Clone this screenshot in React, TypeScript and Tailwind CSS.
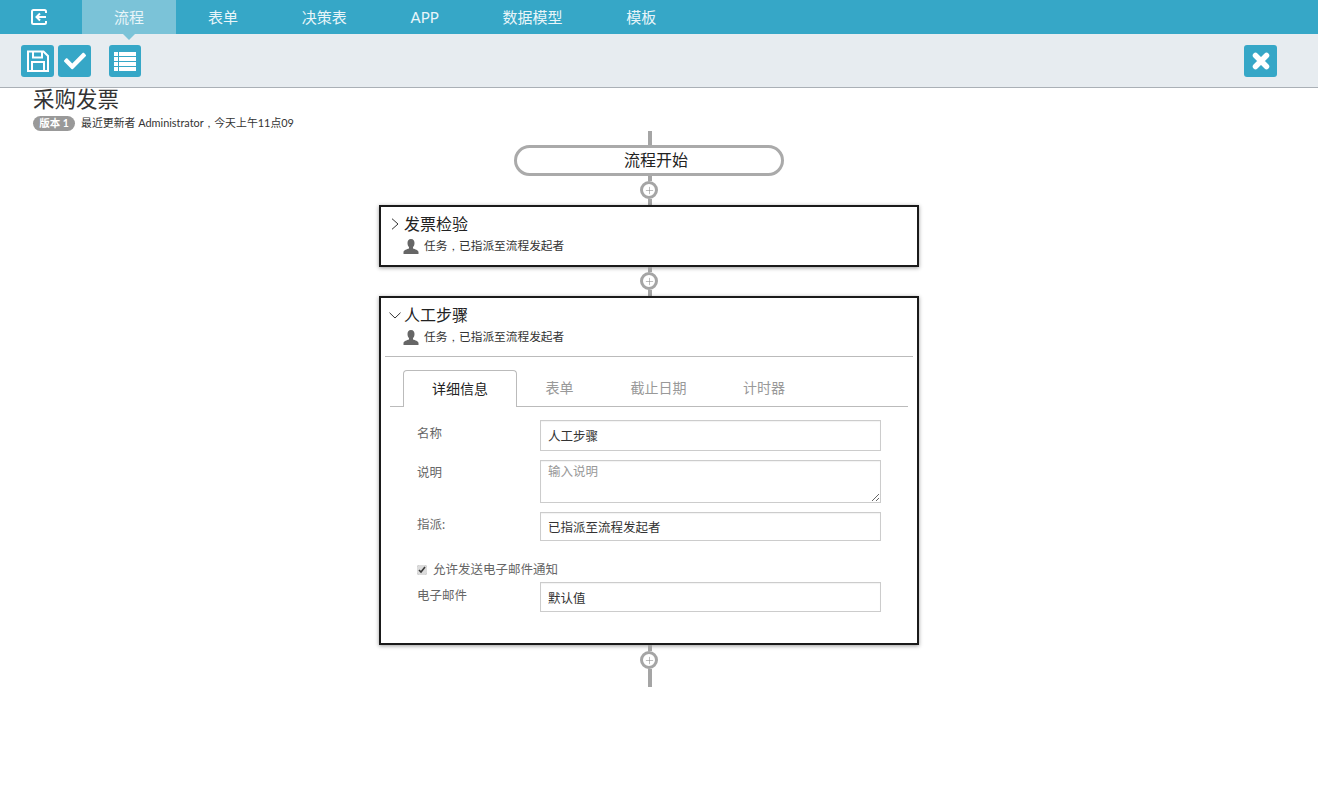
import { FaCheck } from "react-icons/fa";
import { Plus } from "lucide-react";

const font = "font-['Lato','Noto_Sans_CJK_SC',sans-serif]";

function NavItem({ label, active }: { label: string; active?: boolean }) {
    return (
        <div className={`relative flex h-full items-center text-[15px] text-[#e8f5f9] ${active ? "bg-[#7bc3d8] px-8" : "px-[31.9px]"}`}>
            {label}
            {active && (
                <div className="absolute left-1/2 top-full -ml-[6px] h-0 w-0 border-x-[6px] border-t-[6px] border-x-transparent border-t-[#7bc3d8]" />
            )}
        </div>
    );
}

function ToolButton({ children, className = "" }: { children: React.ReactNode; className?: string }) {
    return (
        <button className={`flex h-[32px] items-center justify-center rounded-[3px] bg-[#36a7c7] text-white ${className}`}>
            {children}
        </button>
    );
}

function Connector({ last }: { last?: boolean }) {
    return (
        <div className="flex flex-col items-center">
            <div className={`ml-[2px] w-[4px] bg-[#a5a5a5] ${last ? "h-[6px]" : "h-[5px]"}`} />
            <div className="flex h-[18px] w-[18px] items-center justify-center rounded-full border-[3px] border-[#a5a5a5] bg-white text-[#888]">
                <Plus size={11} strokeWidth={1.2} />
            </div>
            <div className={`ml-[2px] w-[4px] bg-[#a5a5a5] ${last ? "h-[18px]" : "h-[6px]"}`} />
        </div>
    );
}

function StepHead({ title, open }: { title: string; open?: boolean }) {
    return (
        <>
            <div className="flex h-[22px] items-center">
                <div className="flex w-[22px] justify-center pl-[3px] text-[#333]">
                    {open ? (
                        <svg width="12" height="7" viewBox="0 0 12 7" fill="none" stroke="currentColor" strokeWidth="1">
                            <path d="M.5.7 6 6 11.500.7" />
                        </svg>
                    ) : (
                        <svg width="8" height="12" viewBox="0 0 8 12" fill="none" stroke="currentColor" strokeWidth="1">
                            <path d="M1 .7 7 6l-6 5.300" />
                        </svg>
                    )}
                </div>
                <span className="text-[16px] text-[#222]">{title}</span>
            </div>
            <div className="mt-[1px] flex h-[20px] items-center pl-[21px] text-[11.7px] text-[#333]">
                <svg width="16" height="15" viewBox="0 0 16 15" className="text-[#666]" fill="currentColor">
                    <path d="M8 0C5.500 0 4.500 1.800 4.500 4c0 1.800.6 3.200 1.500 4.200v1.300C4 10.200.8 11 .5 13v2h15v-2c-.3-2-3.500-2.800-5.500-3.500V8.200c.9-1 1.500-2.400 1.500-4.200C11.500 1.800 10.500 0 8 0z" />
                </svg>
                <span className="ml-[5px]">任务<span className="mx-[4.5px]">,</span>已指派至流程发起者</span>
            </div>
        </>
    );
}

function Field({ label, value, className = "", labelClass = "pt-[5px]", inputClass = "h-[30px]" }: { label: string; value: string; className?: string; labelClass?: string; inputClass?: string }) {
    return (
        <div className={`flex ${className}`}>
            <label className={`w-[123px] text-[12.5px] leading-[18px] text-[#666] ${labelClass}`}>{label}</label>
            <input
                readOnly
                value={value}
                className={`w-[341px] border border-[#ccc] px-[7px] text-[12.5px] text-[#333] shadow-[inset_0_1px_1px_rgba(0,0,0,0.05)] outline-none ${inputClass}`}
            />
        </div>
    );
}

export default function App() {
    return (
        <div className={`h-[805px] overflow-hidden bg-white ${font}`}>
            <div className="flex h-[34px] bg-[#36a7c7]">
                <div className="flex w-[82px] items-center justify-center pr-[5px] text-white">
                    <svg width="18" height="18" viewBox="0 0 18 18" fill="none" stroke="currentColor" strokeWidth="2">
                        <path d="M16 5V3.500A1.500 1.500 0 0 0 14.500 2H3.500A1.500 1.500 0 0 0 2 3.500v11A1.500 1.500 0 0 0 3.500 16h11a1.500 1.500 0 0 0 1.500-1.500V13" />
                        <path d="M16 9H7M10 5.500 6.500 9l3.500 3.500" />
                    </svg>
                </div>
                <NavItem label="流程" active />
                <NavItem label="表单" />
                <NavItem label="决策表" />
                <NavItem label="APP" />
                <NavItem label="数据模型" />
                <NavItem label="模板" />
            </div>

            <div className="flex h-[54px] items-center border-b border-[#aab0b6] bg-[#e7ecf0] pl-[21px] pr-[41px] pt-[1px]">
                <ToolButton className="w-[33px]">
                    <svg width="24" height="24" viewBox="0 0 24 24" fill="none" stroke="currentColor" strokeWidth="2">
                        <path d="M2 2.500h15.500l4.500 4.500v15H2z" />
                        <path d="M7 2.500v6h9v-6M6 22v-9h12v9" />
                    </svg>
                </ToolButton>
                <ToolButton className="ml-[4px] w-[33px]">
                    <FaCheck size={22} />
                </ToolButton>
                <ToolButton className="ml-[18px] w-[32px]">
                    <svg width="22" height="19" viewBox="0 0 22 19" fill="currentColor">
                        <path d="M0 0h4v4H0zM5 0h17v4H5zM0 5h4v4H0zM5 5h17v4H5zM0 10h4v4H0zM5 10h17v4H5zM0 15h4v4H0zM5 15h17v4H5z" />
                    </svg>
                </ToolButton>
                <ToolButton className="ml-auto w-[33px]">
                    <svg width="18" height="18" viewBox="0 0 18 18" fill="none" stroke="currentColor" strokeWidth="5.500" strokeLinecap="round">
                        <path d="M3.500 3.500l11 11M14.500 3.500l-11 11" />
                    </svg>
                </ToolButton>
            </div>

            <div className="pl-[33px]">
                <h1 className="text-[21.500px] font-normal leading-[23px] text-[#333]">采购发票</h1>
                <div className="mt-[5px] flex h-[15px] items-center">
                    <span className="flex h-[15px] w-[42px] items-center justify-center rounded-full bg-[#999] text-[10.500px] font-bold text-white">版本 1</span>
                    <span className="ml-[6px] text-[10.9px] text-[#333]">最近更新者 Administrator<span className="mx-[4px]">,</span>今天上午11点09</span>
                </div>
            </div>

            <div className="flex w-[1298px] flex-col items-center">
                <div className="ml-[2px] h-[14px] w-[4px] bg-[#a5a5a5]" />
                <div className="flex h-[31px] w-[270px] items-center justify-center rounded-full border-[3px] border-[#aaa] bg-white pb-[2px] pl-[14px] text-[16px] text-[#222]">
                    流程开始
                </div>
                <Connector />

                <div className="h-[62px] w-[540px] border-2 border-[#1a1a1a] bg-white pl-[1px] pt-[6px] shadow-[0_1px_4px_rgba(0,0,0,0.4)]">
                    <StepHead title="发票检验" />
                </div>
                <Connector />

                <div className="h-[349px] w-[540px] border-2 border-[#1a1a1a] bg-white pl-[1px] pt-[6px] shadow-[0_1px_4px_rgba(0,0,0,0.4)]">
                    <StepHead title="人工步骤" open />
                    <div className="ml-[3px] mr-[4px] mt-[9px] border-t border-[#bbb] px-[5px] pt-[13px]">
                        <div className="flex h-[37px] border-b border-[#bbb] pl-[13px] text-[14px] text-[#999]">
                            <div className="-mb-[1px] flex items-center rounded-t-[4px] border border-b-0 border-[#bbb] bg-white px-7 pb-[2px] text-[#222]">详细信息</div>
                            <div className="flex items-center px-[28.500px] pb-[2px]">表单</div>
                            <div className="flex items-center px-[28.500px] pb-[2px]">截止日期</div>
                            <div className="flex items-center px-7 pb-[2px]">计时器</div>
                        </div>
                        <div className="pl-[27px] pt-[13px]">
                            <Field label="名称" value="人工步骤" inputClass="h-[31px]" />
                            <div className="mt-[9px] flex">
                                <label className="w-[123px] pt-[4px] text-[12.5px] leading-[18px] text-[#666]">说明</label>
                                <textarea
                                    readOnly
                                    placeholder="输入说明"
                                    className="block h-[43px] w-[341px] border border-[#ccc] px-[7px] py-[2px] text-[12.5px] shadow-[inset_0_1px_1px_rgba(0,0,0,0.05)] outline-none placeholder:text-[#999]"
                                />
                            </div>
                            <Field label="指派:" value="已指派至流程发起者" className="mt-[9px]" labelClass="pt-[4px]" inputClass="h-[29px]" />
                            <div className="mt-[20px] flex h-[18px] items-center">
                                <input type="checkbox" checked readOnly className="m-0 h-[10px] w-[10px] accent-[#dcdcdc]" />
                                <span className="ml-[6px] text-[12.5px] text-[#666]">允许发送电子邮件通知</span>
                            </div>
                            <Field label="电子邮件" value="默认值" className="mt-[3px]" />
                        </div>
                    </div>
                </div>
                <Connector last />
            </div>
        </div>
    );
}
